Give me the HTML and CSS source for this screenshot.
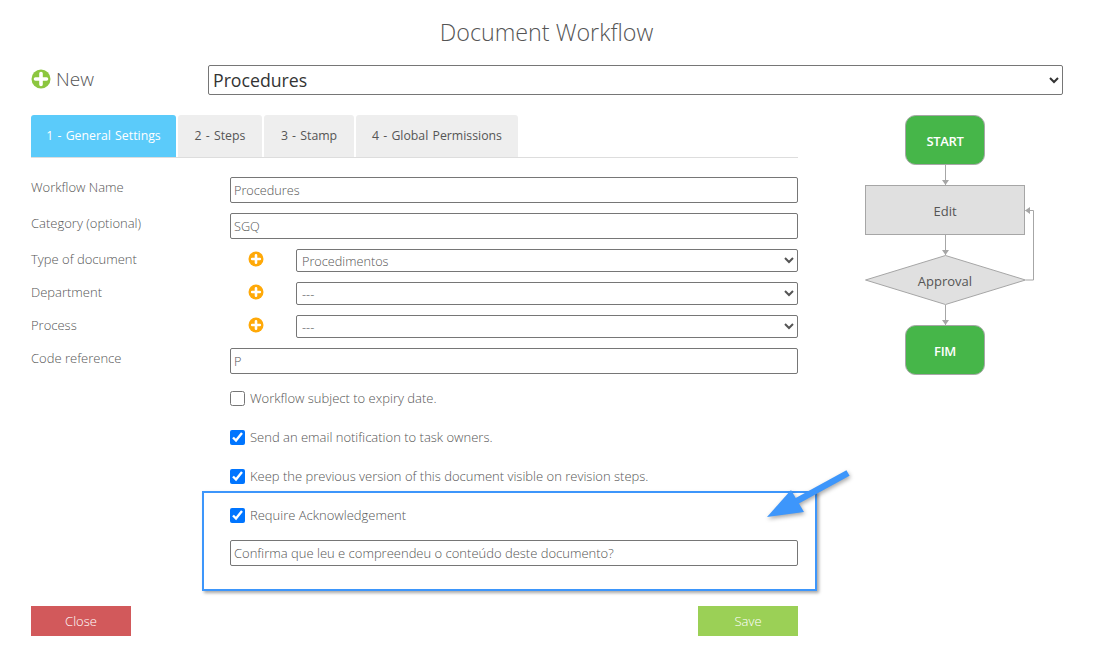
FILE: index.html
```html
<!DOCTYPE html>
<html lang="en">
<head>
<meta charset="utf-8">
<title>Document Workflow</title>
<link rel="stylesheet" href="styles.css">
</head>
<body>
<h1 class="title">Document Workflow</h1>
<div class="top-row">
  <a class="new-link">
    <svg class="plus-icon" width="20" height="20" viewBox="0 0 20 20"><circle cx="10" cy="10" r="9.500" fill="#8cc63f"/><path d="M10 4.500v11M4.500 10h11" stroke="#fff" stroke-width="3.600" stroke-linecap="round"/></svg>
    <span>New</span>
  </a>
  <select class="workflow-select"><option>Procedures</option></select>
</div>
<div class="main">
  <div class="left">
    <div class="tabs">
      <div class="tab tab-active">1 - General Settings</div>
      <div class="tab">2 - Steps</div>
      <div class="tab">3 - Stamp</div>
      <div class="tab">4 - Global Permissions</div>
    </div>
    <div class="form">
      <div class="row row-input"><label>Workflow Name</label><input class="field" value="Procedures"></div>
      <div class="row row-input"><label>Category (optional)</label><input class="field" value="SGQ"></div>
      <div class="row row-select"><label>Type of document</label><span class="add"><svg width="16" height="16" viewBox="0 0 16 16"><circle cx="8" cy="8" r="7.500" fill="#ffa908"/><path d="M8 4.200v7.600M4.200 8h7.600" stroke="#fff" stroke-width="2.600" stroke-linecap="round"/></svg></span><select class="field-select"><option>Procedimentos</option></select></div>
      <div class="row row-select"><label>Department</label><span class="add"><svg width="16" height="16" viewBox="0 0 16 16"><circle cx="8" cy="8" r="7.500" fill="#ffa908"/><path d="M8 4.200v7.600M4.200 8h7.600" stroke="#fff" stroke-width="2.600" stroke-linecap="round"/></svg></span><select class="field-select"><option>---</option></select></div>
      <div class="row row-select"><label>Process</label><span class="add"><svg width="16" height="16" viewBox="0 0 16 16"><circle cx="8" cy="8" r="7.500" fill="#ffa908"/><path d="M8 4.200v7.600M4.200 8h7.600" stroke="#fff" stroke-width="2.600" stroke-linecap="round"/></svg></span><select class="field-select"><option>---</option></select></div>
      <div class="row row-input"><label>Code reference</label><input class="field" value="P"></div>
      <div class="checks">
        <label class="check"><input type="checkbox"><span>Workflow subject to expiry date.</span></label>
        <label class="check"><input type="checkbox" checked><span>Send an email notification to task owners.</span></label>
        <label class="check"><input type="checkbox" checked><span>Keep the previous version of this document visible on revision steps.</span></label>
        <label class="check"><input type="checkbox" checked><span>Require Acknowledgement</span></label>
      </div>
      <input class="field ack-field" value="Confirma que leu e compreendeu o conteúdo deste documento?">
      <div class="highlight"></div>
    </div>
    <div class="actions">
      <button class="btn btn-close">Close</button>
      <button class="btn btn-save">Save</button>
    </div>
  </div>
  <svg class="flow" width="204" height="264" viewBox="860 113 204 264">
    <g fill="none" stroke="#a6a6a6">
      <path d="M945.500 165v20M945.500 235v20M945.500 305v20M1026 280h7.500V210.500h-8"/>
    </g>
    <g fill="#a6a6a6">
      <path d="M942 180h7l-3.500 5zM942 250h7l-3.500 5zM942 320h7l-3.500 5zM1025 210.500l5-3.500v7z"/>
    </g>
    <rect x="905.500" y="115.500" width="79" height="49" rx="10" fill="#46b649" stroke="#a6a6a6"/>
    <rect x="865.500" y="185.500" width="159" height="49" fill="#e0e0e0" stroke="#a6a6a6"/>
    <path d="M945.500 255.500L1025.500 280 945.500 304.500 865.500 280z" fill="#e0e0e0" stroke="#a6a6a6"/>
    <rect x="905.500" y="325.500" width="79" height="49" rx="10" fill="#46b649" stroke="#a6a6a6"/>
    <text class="flow-on" x="945" y="146" text-anchor="middle">START</text>
    <text class="flow-off" x="945" y="216" text-anchor="middle">Edit</text>
    <text class="flow-off" x="945" y="286" text-anchor="middle">Approval</text>
    <text class="flow-on" x="945" y="356" text-anchor="middle">FIM</text>
  </svg>
</div>
<svg class="arrow" width="90" height="56" viewBox="0 0 90 56">
  <path d="M85 4L32 33" stroke="#3d96fb" stroke-width="6.500" fill="none"/>
  <path d="M4 48L28 21 41 43z" fill="#3d96fb"/>
</svg>
</body>
</html>
```
FILE: styles.css
```css
html, body { margin: 0; padding: 0; }
body {
  position: relative;
  width: 1093px;
  height: 648px;
  overflow: hidden;
  background: #fff;
  color: #555;
  font-family: "Open Sans", "Liberation Sans", sans-serif;
  font-weight: 300;
  font-size: 13px;
}
.title {
  margin: 0;
  padding-top: 16px;
  height: 49px;
  box-sizing: border-box;
  text-align: center;
  font-size: 23.300px;
  line-height: 32px;
  font-weight: 300;
  color: #555;
}
.top-row {
  display: flex;
  align-items: center;
  padding: 0 30px 0 31px;
  height: 30px;
  margin-top: 16px;
}
.new-link {
  display: flex;
  align-items: center;
  gap: 5px;
  width: 177px;
  height: 30px;
  padding-bottom: 2px;
  box-sizing: border-box;
  font-size: 19px;
  color: #555;
}
.workflow-select {
  flex: 1;
  height: 30px;
  box-sizing: border-box;
  background: #fff;
  border: 1px solid #767676;
  border-radius: 2px;
  padding-left: 0;
  font-family: inherit;
  font-weight: 400;
  font-size: 17.700px;
  color: #333;
}
.main {
  display: flex;
  padding-left: 31px;
  margin-top: 20px;
}
.left { width: 767px; flex: none; }
.tabs {
  display: grid;
  grid-template-columns: 145px 84px 90px 162px;
  gap: 2px;
  height: 42px;
  border-bottom: 1px solid #ddd;
}
.tab {
  height: 42px;
  line-height: 42px;
  text-align: center;
  background: #eee;
  border-radius: 3px 3px 0 0;
  font-size: 12.300px;
  font-weight: 400;
  word-spacing: 1px;
  color: #555;
  white-space: nowrap;
}
.tab-active { background: #5bcbfa; color: #fff; }
.form { position: relative; padding-top: 19px; }
.row {
  display: grid;
  align-items: start;
}
.row label { line-height: 20px; color: #555; }
.row-input {
  grid-template-columns: 199px 568px;
  height: 26px;
  margin-bottom: 10px;
}
.row-select {
  grid-template-columns: 199px 66px 502px;
  height: 23px;
  margin-bottom: 10px;
}
.add { padding: 2px 0 0 18px; height: 16px; line-height: 0; }
.field, .field-select {
  box-sizing: border-box;
  width: 100%;
  background: #fff;
  border: 1px solid #767676;
  border-radius: 2px;
  font-family: inherit;
  font-weight: 300;
  font-size: 12.700px;
  color: #555;
}
.field { height: 26px; padding: 0 3px; }
.field-select { height: 23px; padding: 0 0 0 1px; }
.checks { margin: 14px 0 0 199px; }
.check {
  display: flex;
  align-items: center;
  gap: 5px;
  height: 20px;
  margin-bottom: 19px;
  color: #555;
}
.check:last-child { margin-bottom: 15px; }
.check input {
  width: 15px;
  height: 15px;
  margin: 0;
}
.ack-field {
  display: block;
  width: 568px;
  margin: 2px 0 0 199px;
  font-size: 13px;
}
.highlight {
  position: absolute;
  left: 171px;
  top: 333px;
  width: 615px;
  height: 100px;
  box-sizing: border-box;
  border: 2px solid #3d96fb;
  box-shadow: 2px 2px 3px rgba(0, 0, 0, 0.35);
}
.actions {
  display: flex;
  justify-content: space-between;
  margin-top: 40px;
}
.btn {
  width: 100px;
  height: 30px;
  border: 0;
  font-family: inherit;
  font-weight: 300;
  font-size: 13px;
  color: #fff;
}
.btn-close { background: #d2595b; }
.btn-save { background: #9bd056; }
.flow { flex: none; align-self: flex-start; margin: -2px 0 0 62px; }
.flow-on { fill: #fff; font-size: 13px; font-weight: 600; letter-spacing: -0.300px; }
.flow-off { fill: #555; font-size: 13px; font-weight: 400; }
.arrow {
  position: absolute;
  left: 763px;
  top: 469px;
  filter: drop-shadow(1px 2px 2px rgba(0, 0, 0, 0.35));
}
```
